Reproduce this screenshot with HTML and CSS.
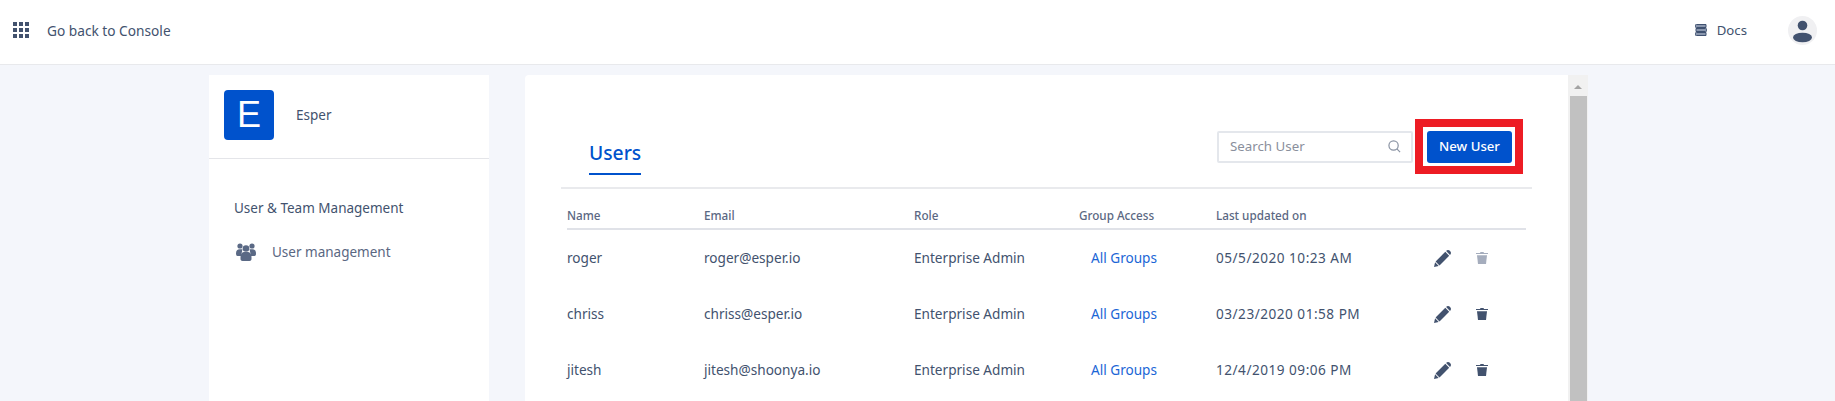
FILE: index.html
```html
<!DOCTYPE html>
<html lang="en">
<head>
<meta charset="utf-8">
<title>Users</title>
<link rel="stylesheet" href="styles.css">
</head>
<body>
<header class="topbar">
  <svg class="apps-icon" viewBox="0 0 16 16"><rect x="0" y="0" width="4" height="4"/><rect x="6" y="0" width="4" height="4"/><rect x="12" y="0" width="4" height="4"/><rect x="0" y="6" width="4" height="4"/><rect x="6" y="6" width="4" height="4"/><rect x="12" y="6" width="4" height="4"/><rect x="0" y="12" width="4" height="4"/><rect x="6" y="12" width="4" height="4"/><rect x="12" y="12" width="4" height="4"/></svg>
  <span class="back-link">Go back to Console</span>
  <div class="topbar-right">
    <svg class="docs-icon" viewBox="0 0 12 12"><path d="M1.500 0.500H11V3.500H1.500A1.500 1.500 0 0 1 1.500 0.500Z" fill="#8a97ae" stroke="#3f5170"/><path d="M1 4.500H10.500A1.500 1.500 0 0 1 10.500 7.500H1Z" fill="#8a97ae" stroke="#3f5170"/><path d="M1.500 8.500H11V11.500H1.500A1.500 1.500 0 0 1 1.500 8.500Z" fill="#8a97ae" stroke="#3f5170"/></svg>
    <span class="docs-link">Docs</span>
    <span class="avatar"><svg viewBox="0 0 29 29"><circle cx="14.500" cy="9.500" r="4.800"/><ellipse cx="14.500" cy="21.500" rx="9.500" ry="4.800"/></svg></span>
  </div>
</header>
<div class="page">
  <aside class="sidebar">
    <div class="org">
      <span class="org-logo">E</span>
      <span class="org-name">Esper</span>
    </div>
    <div class="nav">
      <div class="nav-title">User &amp; Team Management</div>
      <div class="nav-item">
        <svg class="users-icon" viewBox="0 0 20 18"><circle cx="4" cy="3" r="2.600"/><circle cx="16" cy="3" r="2.600"/><path d="M0 10.500C0 7.500 1.500 6.300 3.500 6.300H6.500L5 13H1.500C.5 13 0 12 0 10.500Z"/><path d="M20 10.500C20 7.500 18.500 6.300 16.500 6.300H13.500L15 13H18.500C19.500 13 20 12 20 10.500Z"/><circle cx="10" cy="5.500" r="3.300"/><path d="M4.500 14C4.500 10.500 6.500 9 8 9H12C13.500 9 15.500 10.500 15.500 14V16C15.500 17.200 14.700 18 13.500 18H6.500C5.300 18 4.500 17.200 4.500 16Z"/></svg>
        <span>User management</span>
      </div>
    </div>
  </aside>
  <main class="panel">
    <div class="panel-body">
      <div class="toolbar">
        <div class="tab">Users</div>
        <div class="actions">
          <div class="search">
            <span class="search-text">Search User</span>
            <svg class="search-icon" viewBox="0 0 14 14"><circle cx="6" cy="6" r="5"/><path d="M9.600 9.600L13 13"/></svg>
          </div>
          <div class="highlight"><button class="primary" type="button">New User</button></div>
        </div>
      </div>
      <div class="table">
        <div class="row head"><span>Name</span><span>Email</span><span>Role</span><span>Group Access</span><span>Last updated on</span></div>
        <div class="row">
          <span>roger</span><span>roger@esper.io</span><span>Enterprise Admin</span><span class="link">All Groups</span><span class="date">05/5/2020 10:23 AM</span>
          <span class="row-actions">
            <svg class="pencil" viewBox="0 0 17 17"><path d="M12.100 1L16 4.900C16.500 4.300 17 3.600 17 3C17 1.500 15.500 0 14 0C13.300 0 12.700 .4 12.100 1Z"/><path d="M11.300 1.800L15.200 5.700L5.500 15.400L1.600 11.500Z"/><path d="M1.100 12.300L4.700 15.900L0 17Z"/></svg>
            <svg class="trash muted" viewBox="0 0 12 12"><path d="M4.500 0H7.500L8 1H12V2H0V1H4Z"/><path d="M1 3.200H11L10 12H2Z"/></svg>
          </span>
        </div>
        <div class="row">
          <span>chriss</span><span>chriss@esper.io</span><span>Enterprise Admin</span><span class="link">All Groups</span><span class="date">03/23/2020 01:58 PM</span>
          <span class="row-actions">
            <svg class="pencil" viewBox="0 0 17 17"><path d="M12.100 1L16 4.900C16.500 4.300 17 3.600 17 3C17 1.500 15.500 0 14 0C13.300 0 12.700 .4 12.100 1Z"/><path d="M11.300 1.800L15.200 5.700L5.500 15.400L1.600 11.500Z"/><path d="M1.100 12.300L4.700 15.900L0 17Z"/></svg>
            <svg class="trash" viewBox="0 0 12 12"><path d="M4.500 0H7.500L8 1H12V2H0V1H4Z"/><path d="M1 3.200H11L10 12H2Z"/></svg>
          </span>
        </div>
        <div class="row">
          <span>jitesh</span><span>jitesh@shoonya.io</span><span>Enterprise Admin</span><span class="link">All Groups</span><span class="date">12/4/2019 09:06 PM</span>
          <span class="row-actions">
            <svg class="pencil" viewBox="0 0 17 17"><path d="M12.100 1L16 4.900C16.500 4.300 17 3.600 17 3C17 1.500 15.500 0 14 0C13.300 0 12.700 .4 12.100 1Z"/><path d="M11.300 1.800L15.200 5.700L5.500 15.400L1.600 11.500Z"/><path d="M1.100 12.300L4.700 15.900L0 17Z"/></svg>
            <svg class="trash" viewBox="0 0 12 12"><path d="M4.500 0H7.500L8 1H12V2H0V1H4Z"/><path d="M1 3.200H11L10 12H2Z"/></svg>
          </span>
        </div>
      </div>
    </div>
    <div class="scrollbar">
      <span class="scroll-arrow"></span>
      <span class="scroll-thumb"></span>
    </div>
  </main>
</div>
</body>
</html>
```

FILE: styles.css
```css
* { box-sizing: border-box; }
html, body { margin: 0; height: 401px; overflow: hidden; }
body {
  background: #f4f6fb;
  font-family: "Noto Sans", "Liberation Sans", sans-serif;
  color: #42526e;
  font-size: 13px;
}
.topbar {
  height: 65px;
  background: #fff;
  border-bottom: 1px solid #e8e9ec;
  display: flex;
  align-items: center;
  padding: 0 18px 4px 13px;
}
.apps-icon { width: 16px; height: 16px; fill: #42526e; }
.back-link { margin-left: 18px; font-size: 13.700px; color: #42526e; }
.topbar-right { margin-left: auto; display: flex; align-items: center; }
.docs-icon { width: 12px; height: 12px; }
.docs-link { margin-left: 10px; font-size: 13.200px; color: #42526e; }
.avatar {
  margin-left: 41px;
  width: 29px;
  height: 29px;
  border-radius: 50%;
  background: #f0f0f2;
  display: block;
}
.avatar svg { display: block; width: 29px; height: 29px; fill: #42526e; }

.page {
  display: flex;
  align-items: flex-start;
  gap: 36px;
  padding: 10px 0 0 209px;
  height: 336px;
}
.sidebar { width: 280px; height: 326px; background: #fff; flex: none; }
.org {
  height: 84px;
  border-bottom: 1px solid #e4e5e9;
  display: flex;
  align-items: flex-start;
  padding: 15px 0 0 15px;
  gap: 22px;
}
.org-logo {
  width: 50px;
  height: 50px;
  background: #0052cc;
  border-radius: 4px;
  color: #fff;
  font-family: "Liberation Sans", sans-serif;
  font-size: 36px;
  line-height: 50px;
  text-align: center;
}
.org-name { font-size: 13.500px; line-height: 50px; }
.nav { padding: 39px 0 0 25px; }
.nav-title { font-size: 13.500px; line-height: 20px; }
.nav-item {
  margin-top: 24px;
  display: flex;
  align-items: center;
  gap: 16px;
  padding-left: 2px;
  color: #5a6782;
  font-size: 13.500px;
  line-height: 20px;
}
.users-icon { width: 20px; height: 18px; fill: #5a6985; flex: none; }

.panel {
  display: flex;
  width: 1063px;
  height: 326px;
  background: #fff;
  border-radius: 4px 0 0 0;
  flex: none;
}
.panel-body { width: 1043px; padding: 44px 36px 0; flex: none; }
.toolbar {
  display: flex;
  justify-content: space-between;
  align-items: flex-end;
  border-bottom: 2px solid #e9eaed;
  padding: 0 9px 13px 28px;
  height: 70px;
}
.tab {
  color: #0052cc;
  font-size: 19.300px;
  font-weight: 500;
  line-height: 28px;
  border-bottom: 2px solid #0052cc;
  padding-bottom: 6px;
  margin-bottom: -1px;
}
.actions { display: flex; align-items: center; gap: 2px; }
.search {
  width: 196px;
  height: 32px;
  border: 2px solid #e4e7ec;
  border-radius: 2px;
  display: flex;
  align-items: center;
  justify-content: space-between;
  padding: 0 10px 1px 11px;
}
.search-text { color: #8a8f9c; font-size: 13.300px; }
.search-icon { width: 13px; height: 13px; fill: none; stroke: #8a93a3; stroke-width: 1.300; }
.highlight {
  border: 8px solid #ed1c24;
  padding: 4px 3px 3px 4px;
  background: #fff;
  width: 108px;
  height: 55px;
}
.primary {
  display: block;
  width: 85px;
  height: 32px;
  border: 0;
  border-radius: 3px;
  background: #0052cc;
  color: #fff;
  font: 500 13.200px "Noto Sans", sans-serif;
  padding: 0 0 3px;
}

.table { margin-left: 6px; width: 959px; }
.row {
  display: grid;
  grid-template-columns: 137px 210px 165px 137px 218px 1fr;
  align-items: center;
  height: 56px;
  font-size: 13.600px;
}
.row > span:not(.row-actions) { margin-bottom: 2px; }
.row.head {
  height: 41px;
  align-items: start;
  padding-top: 19px;
  border-bottom: 2px solid #e0e2e8;
  font-size: 11.700px;
  font-weight: 500;
  line-height: 14px;
  color: #5a6782;
}
.link { color: #1a66d6; padding-left: 12px; }
.date { letter-spacing: 0.500px; }
.row-actions { display: flex; align-items: center; gap: 25px; }
.pencil { width: 17px; height: 17px; fill: #42526e; }
.trash { width: 12px; height: 12px; fill: #42526e; }
.trash.muted { fill: #a5adbd; }

.scrollbar {
  width: 20px;
  background: #f1f1f1;
  flex: none;
  display: flex;
  flex-direction: column;
  align-items: center;
}
.scroll-arrow {
  height: 21px;
  width: 100%;
  flex: none;
  position: relative;
}
.scroll-arrow::before {
  content: "";
  position: absolute;
  left: 6px;
  top: 10px;
  border-left: 4px solid transparent;
  border-right: 4px solid transparent;
  border-bottom: 4px solid #a3a3a3;
}
.scroll-thumb { width: 17px; flex: 1; background: #c1c1c1; }
```
